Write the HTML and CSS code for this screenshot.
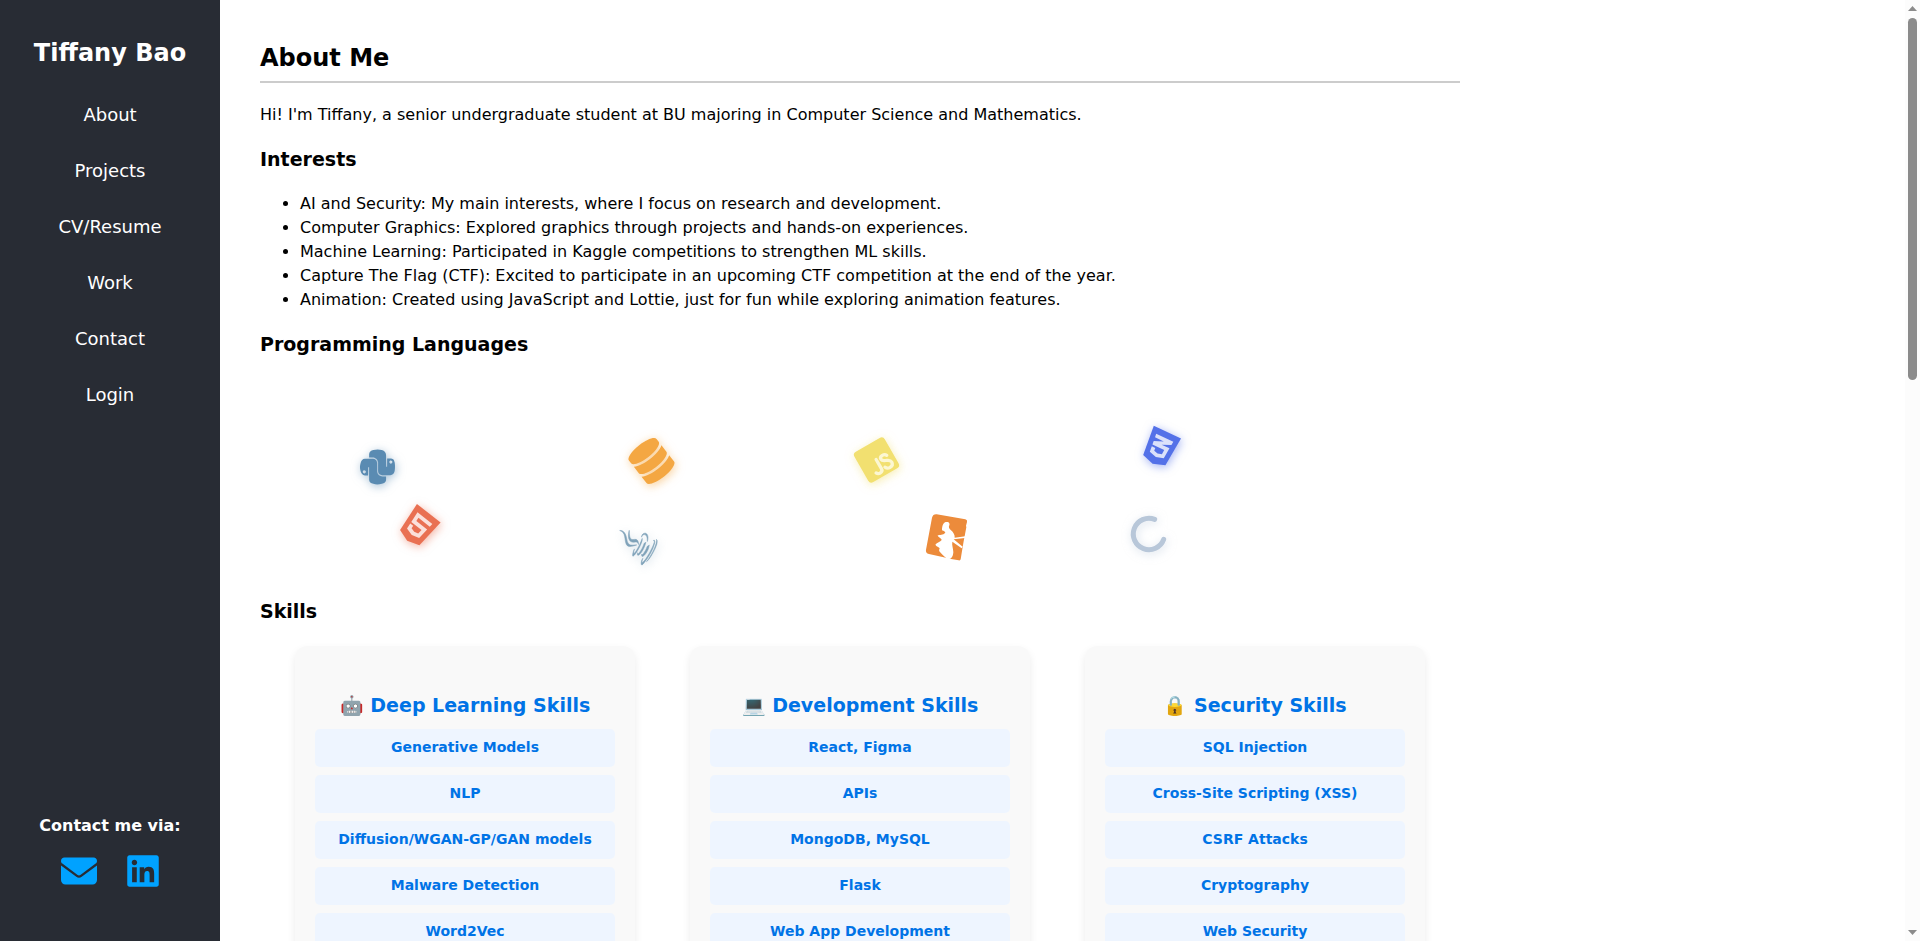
FILE: index.html
```html
<!DOCTYPE html>
<html lang="en">
<head>
<meta charset="utf-8">
<title>Tiffany Bao</title>
<link rel="stylesheet" href="styles.css">
</head>
<body>
<aside class="sidebar">
  <div>
    <h2 class="sidebar-title">Tiffany Bao</h2>
    <nav>
      <ul class="nav-list">
        <li><a href="#about">About</a></li>
        <li><a href="#projects">Projects</a></li>
        <li><a href="#cv">CV/Resume</a></li>
        <li><a href="#work">Work</a></li>
        <li><a href="#contact">Contact</a></li>
        <li><a href="#login">Login</a></li>
      </ul>
    </nav>
  </div>
  <div class="contact">
    <p class="contact-label">Contact me via:</p>
    <div class="contact-links">
      <a href="#email" aria-label="Email"><svg width="36" height="36" viewBox="0 0 512 512"><path d="M48 64C21.5 64 0 85.5 0 112c0 15.100 7.100 29.300 19.200 38.400L236.800 313.600c11.400 8.500 27 8.500 38.400 0L492.800 150.400c12.100-9.100 19.200-23.300 19.200-38.400c0-26.500-21.500-48-48-48H48zM0 176V384c0 35.300 28.700 64 64 64H448c35.300 0 64-28.700 64-64V176L294.400 339.200c-22.800 17.100-54 17.100-76.800 0L0 176z"/></svg></a>
      <a href="#linkedin" aria-label="LinkedIn"><svg width="32" height="36" viewBox="0 0 448 512"><path d="M416 32H31.900C14.300 32 0 46.500 0 64.300v383.400C0 465.500 14.300 480 31.900 480H416c17.600 0 32-14.500 32-32.300V64.300c0-17.800-14.400-32.300-32-32.300zM135.400 416H69V202.200h66.500V416zm-33.200-243c-21.300 0-38.500-17.300-38.500-38.500S80.900 96 102.200 96c21.200 0 38.500 17.300 38.500 38.500 0 21.300-17.200 38.500-38.500 38.500zm282.100 243h-66.400V312c0-24.800-.5-56.700-34.500-56.700-34.600 0-39.900 27-39.900 54.900V416h-66.400V202.200h63.700v29.200h.9c8.900-16.800 30.600-34.500 62.200-34.500 66.500 0 78.900 43.800 78.900 100.900V416z"/></svg></a>
    </div>
  </div>
</aside>

<main class="content">
  <div class="content-inner" id="about">
    <h1 class="page-title">About Me</h1>
    <p class="intro">Hi! I'm Tiffany, a senior undergraduate student at BU majoring in Computer Science and Mathematics.</p>
    <h3>Interests</h3>
    <ul class="interests">
      <li>AI and Security: My main interests, where I focus on research and development.</li>
      <li>Computer Graphics: Explored graphics through projects and hands-on experiences.</li>
      <li>Machine Learning: Participated in Kaggle competitions to strengthen ML skills.</li>
      <li>Capture The Flag (CTF): Excited to participate in an upcoming CTF competition at the end of the year.</li>
      <li>Animation: Created using JavaScript and Lottie, just for fun while exploring animation features.</li>
    </ul>
    <h3>Programming Languages</h3>
    <div class="languages">
      <div class="lang python"><svg width="35" height="40" viewBox="0 0 448 512"><path d="M439.800 200.500c-7.700-30.900-22.300-54.200-53.400-54.200h-40.100v47.400c0 36.800-31.200 67.800-66.800 67.800H172.700c-29.200 0-53.400 25-53.400 54.300v101.800c0 29 25.200 46 53.400 54.300 33.800 9.900 66.300 11.700 106.800 0 26.900-7.800 53.400-23.500 53.400-54.300v-40.700H226.200v-13.600h160.200c31.100 0 42.600-21.700 53.400-54.200 11.200-33.500 10.700-65.700 0-108.600zM286.200 404c11.100 0 20.100 9.100 20.100 20.300 0 11.300-9 20.400-20.100 20.400-11 0-20.100-9.200-20.100-20.400.1-11.300 9.100-20.300 20.100-20.300zM167.800 248.100h106.800c29.700 0 53.400-24.500 53.400-54.300V91.900c0-29-24.400-50.700-53.400-55.600-35.800-5.900-74.700-5.600-106.800.1-45.200 8-53.400 24.700-53.400 55.600v40.700h106.900v13.600h-147c-31.100 0-58.300 18.700-66.800 54.200-9.800 40.700-10.200 66.100 0 108.600 7.600 31.600 25.700 54.200 56.800 54.200H101v-48.800c0-35.300 30.500-66.400 66.800-66.400zm-6.700-142.600c-11.100 0-20.100-9.100-20.100-20.300.1-11.300 9-20.400 20.100-20.400 11 0 20.100 9.200 20.100 20.400s-9 20.300-20.100 20.300z"/></svg></div>
      <div class="lang html5"><svg width="30" height="40" viewBox="0 0 384 512"><path d="M0 32l34.900 395.800L191.500 480l157.600-52.200L384 32H0z"/><path fill="#fbe0da" d="M308.200 159.900H124.400l4.100 49.400h175.600l-13.600 148.400-97.900 27v.3h-1.100l-98.700-27.300-6-75.800h47.700L138 320l53.500 14.500 53.700-14.500 6-62.200H84.300L71.500 112.200h241.100l-4.400 47.700z"/></svg></div>
      <div class="lang database"><svg width="35" height="40" viewBox="0 0 448 512"><path d="M448 73v46C448 159 348 192 224 192S0 159 0 119V73C0 33 100 0 224 0s224 33 224 73zM448 176v103C448 319 348 352 224 352S0 319 0 279V176c48 33 136 49 224 49S400 209 448 176zm0 160v103C448 479 348 512 224 512S0 479 0 439V336c48 33 136 49 224 49S400 369 448 336z"/></svg></div>
      <div class="lang java"><svg width="30" height="40" viewBox="0 0 384 512"><path d="M277.740 312.900c9.800-6.700 23.400-12.500 23.400-12.500s-38.700 7-77.200 10.200c-47.100 3.900-97.700 4.700-123.100 1.300-60.100-8 33-30.100 33-30.100s-36.100-2.400-80.600 19c-52.500 25.400 130 37 224.500 12.100zm-85.400-32.100c-19-42.700-83.100-80.200 0-145.800C296 53.200 242.840 0 242.840 0c21.500 84.500-75.600 110.100-110.700 162.600-23.900 35.900 11.700 74.400 60.200 118.200zm114.600-176.200c.1 0-175.200 43.800-91.500 140.200 24.700 28.400-6.500 54-6.500 54s62.700-32.400 33.900-72.900c-26.900-37.800-47.500-56.600 64.100-121.300zm-6.100 270.500a12.190 12.190 0 0 1-2 2.600c128.300-33.700 81.100-118.900 19.800-97.300a17.330 17.330 0 0 0-8.200 6.300 70.450 70.450 0 0 1 11-3c31-6.500 75.500 41.500-20.600 91.400zM348 437.400s14.500 11.900-15.900 21.200c-57.900 17.500-240.800 22.800-291.600.7-18.300-7.900 16-19 26.800-21.300 11.200-2.400 17.700-2 17.700-2-20.300-14.300-131.300 28.100-56.400 40.200C232.840 509.400 401 461.300 348 437.400zM124.440 396c-78.700 22 47.900 67.400 148.100 24.500a185.890 185.890 0 0 1-28.200-13.800c-44.700 8.500-65.400 9.100-106 4.500-33.500-3.800-13.900-15.200-13.900-15.200zm179.800 97.200c-78.700 14.800-175.800 13.100-233.300 3.600 0-.1 11.800 9.700 72.400 13.600 92.200 5.900 233.800-3.300 237.100-46.900 0 0-6.400 16.500-76.200 29.700zM260.640 353c-59.200 11.400-93.500 11.100-136.800 6.600-33.500-3.500-11.600-19.700-11.600-19.700-86.800 28.800 48.200 61.400 169.500 25.900a60.370 60.370 0 0 1-21.100-12.800z"/></svg></div>
      <div class="lang js"><svg width="35" height="40" viewBox="0 0 448 512"><rect y="32" width="448" height="448" rx="48"/><g fill="none" stroke="#fcf7d2" stroke-width="42" stroke-linecap="round" stroke-linejoin="round"><path d="M223 248v132q0 44-42 44-32 0-44-28"/><path d="M368 270q-14-29-50-29-40 0-40 37 0 24 48 44 54 20 54 54 0 48-52 48-40 0-56-34"/></g></svg></div>
      <div class="lang burp"><svg width="60" height="60" viewBox="0 0 180 180"><path d="M65 28L151 43q7 2 5 8l-3 11 1 5-8 42-3 17-6 37q-1 4-6 3l-27-5q-3-6-8-2L42 147q-11-3-9-13L51 38q3-11 14-10z"/><path fill="#fff" d="M92 51c-9 4-11 14-11 25 6 2 9 4 10 7-7 8-17 6-23 8 2 8 11 8 12 14-4 6-14 8-19 14 3 6 11 7 13 11-3 6-2 10 3 13 8 9 22 24 31 17 5-6 6-9 7-18 0-12-5-20-3-32l28 20 3-5-27-22 34-4 1-5-32 4c1-8-4-16-11-22-6-6-8-9-5-15 2-5-1-9-4-10z"/></svg></div>
      <div class="lang css3"><svg width="30" height="40" viewBox="0 0 384 512"><path d="M0 32l34.900 395.800L192 480l157.100-52.200L384 32H0z"/><path fill="#dbe1fa" d="M313.100 112l-4.800 47.300L193 208.600l-.3.1h111.500l-12.800 146.600-98.200 28.700-98.800-29.200-6.400-73.900h48.900l3.200 38.300 52.600 13.300 54.700-15.400 3.700-61.600-166.300-.5v-.1l-.2.1-3.600-46.300L193.100 162l6.500-2.700H76.700L70.900 112h242.200z"/></svg></div>
      <div class="lang ring"><svg width="40" height="40" viewBox="0 0 120 120"><path d="M77 16A47 47 0 1 0 104 76" fill="none" stroke="currentColor" stroke-width="15" stroke-linecap="round"/></svg></div>
    </div>
    <h3>Skills</h3>
    <div class="skills">
      <section class="card">
        <h3 class="card-title">🤖 Deep Learning Skills</h3>
        <ul class="skill-list">
          <li>Generative Models</li>
          <li>NLP</li>
          <li>Diffusion/WGAN-GP/GAN models</li>
          <li>Malware Detection</li>
          <li>Word2Vec</li>
        </ul>
      </section>
      <section class="card">
        <h3 class="card-title">💻 Development Skills</h3>
        <ul class="skill-list">
          <li>React, Figma</li>
          <li>APIs</li>
          <li>MongoDB, MySQL</li>
          <li>Flask</li>
          <li>Web App Development</li>
        </ul>
      </section>
      <section class="card">
        <h3 class="card-title">🔒 Security Skills</h3>
        <ul class="skill-list">
          <li>SQL Injection</li>
          <li>Cross-Site Scripting (XSS)</li>
          <li>CSRF Attacks</li>
          <li>Cryptography</li>
          <li>Web Security</li>
        </ul>
      </section>
    </div>
  </div>
</main>

<div class="scrollbar" aria-hidden="true">
  <svg width="9" height="5" viewBox="0 0 9 5"><path d="M0 5L4.500 0 9 5z"/></svg>
  <div class="scroll-track"><div class="scroll-thumb"></div></div>
  <svg width="9" height="5" viewBox="0 0 9 5"><path d="M0 0L4.500 5 9 0z"/></svg>
</div>
</body>
</html>
```

FILE: styles.css
```css
* { box-sizing: border-box; }

html { scrollbar-width: none; }

body {
  margin: 0;
  background: #fff;
  color: #000;
  font-family: "DejaVu Sans", sans-serif;
  font-size: 16px;
  line-height: 24px;
}

ul { margin: 0; }

/* Sidebar */
.sidebar {
  position: fixed;
  top: 0;
  bottom: 0;
  left: 0;
  width: 220px;
  padding: 40px 20px 52px;
  display: flex;
  flex-direction: column;
  justify-content: space-between;
  background: #282c34;
  color: #fff;
  text-align: center;
}

.sidebar-title {
  margin: 0 0 21px;
  font-size: 24px;
  line-height: 26px;
}

.nav-list {
  padding: 0;
  list-style: none;
}

.nav-list a {
  display: block;
  padding: 16px 0;
  color: #fff;
  font-size: 18px;
  text-decoration: none;
}

.contact-label {
  margin: 0 0 15px;
  font-weight: bold;
}

.contact-links {
  display: flex;
  justify-content: center;
  gap: 30px;
}

.contact-links svg {
  display: block;
  fill: #00a2ff;
}

/* Main column */
.content {
  min-height: 250vh;
  margin-left: 220px;
  padding: 40px;
}

.content-inner { max-width: 1200px; }

.page-title {
  margin: 0;
  padding-bottom: 5px;
  border-bottom: 2px solid #ccc;
  font-size: 24px;
  line-height: 36px;
}

.intro { margin: 20px 0 18px; }

h3 {
  margin: 18px 0 19px;
  font-size: 19px;
  line-height: 28px;
}

.interests { padding-left: 40px; }

/* Floating language icons */
.languages {
  position: relative;
  height: 202px;
}

.lang {
  position: absolute;
  color: var(--tint);
  filter: drop-shadow(1px 2px 5px var(--glow));
}

.lang svg {
  display: block;
  fill: currentColor;
  overflow: visible;
}

.python { left: 100px; top: 70px; --tint: #5a8bb2; --glow: #5a8bb288; }
.python svg { transform: rotate(90deg); }
.html5 { left: 143px; top: 130px; --tint: #e97052; --glow: #e9705288; }
.html5 svg { transform: rotate(38deg); }
.database { left: 374px; top: 64px; --tint: #f4a742; --glow: #f4a74288; }
.database svg { transform: rotate(-38deg); }
.java { left: 360px; top: 147px; --tint: #7fa2b9; --glow: #7fa2b966; }
.java svg { transform: rotate(-60deg); stroke: currentColor; stroke-width: 6; }
.js { left: 599px; top: 63px; --tint: #f2e070; --glow: #f2e07088; }
.js svg { transform: rotate(-30deg); }
.burp { left: 655px; top: 128px; --tint: #ec8b3b; --glow: transparent; }
.css3 { left: 885px; top: 51px; --tint: #5471e8; --glow: #5471e888; }
.css3 svg { transform: rotate(25deg); }
.ring { left: 869px; top: 137px; --tint: #b8c7d9; --glow: #b8c7d988; }

/* Skill cards */
.skills {
  display: grid;
  grid-template-columns: repeat(3, 1fr);
  gap: 55px;
  margin-top: 21px;
  padding: 0 35px;
}

.card {
  padding: 20px;
  border-radius: 12px;
  background: #f9f9f9;
  box-shadow: 0 4px 8px rgba(0, 0, 0, 0.08);
  text-align: center;
}

.card-title {
  margin: 25px 0 10px;
  color: #0073e6;
}

.skill-list {
  display: grid;
  gap: 8px;
  padding: 0;
  list-style: none;
}

.skill-list li {
  padding: 6px 8px 8px;
  border-radius: 5px;
  background: #eef5ff;
  color: #0073e6;
  font-size: 14px;
  font-weight: bold;
}

/* Page scrollbar */
.scrollbar {
  position: fixed;
  top: 0;
  right: 0;
  bottom: 0;
  width: 15px;
  padding: 6px 3px;
  display: flex;
  flex-direction: column;
  gap: 7px;
  background: #fcfcfc;
}

.scrollbar svg {
  display: block;
  fill: #8b8b8b;
}

.scroll-track { flex: 1; }

.scroll-thumb {
  height: 40%;
  border-radius: 5px;
  background: #8b8b8b;
}
```
